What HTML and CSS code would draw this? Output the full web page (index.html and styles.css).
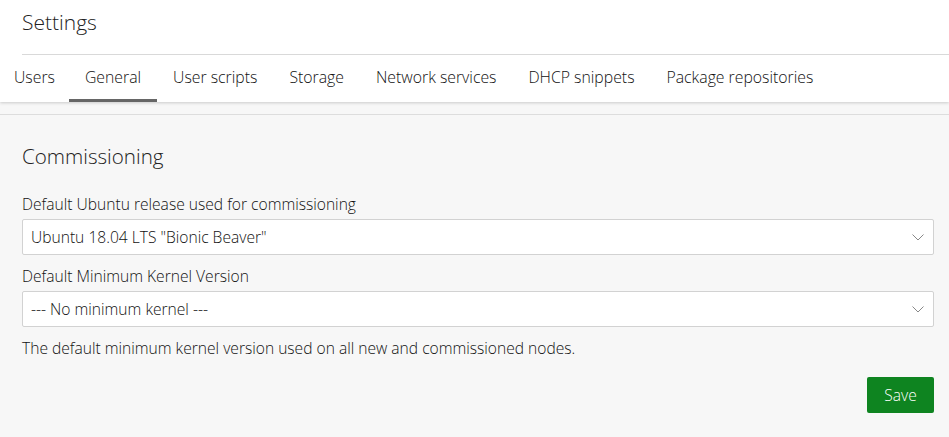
FILE: index.html
```html
<!DOCTYPE html>
<html>
<head>
<meta charset="utf-8">
<link rel="stylesheet" href="styles.css">
</head>
<body>
<header class="header">
  <h1 class="title">Settings</h1>
  <nav class="tabs">
    <a class="tab">Users</a>
    <a class="tab active">General</a>
    <a class="tab">User scripts</a>
    <a class="tab">Storage</a>
    <a class="tab">Network services</a>
    <a class="tab">DHCP snippets</a>
    <a class="tab">Package repositories</a>
  </nav>
</header>
<main class="content">
  <h2 class="section-title">Commissioning</h2>
  <label class="label">Default Ubuntu release used for commissioning</label>
  <div class="select"><span>Ubuntu 18.04 LTS "Bionic Beaver"</span>
    <svg class="chev" width="12" height="7" viewBox="0 0 12 7"><path d="M0.5 0.5 L6 6 L11.5 0.5" fill="none" stroke="#888" stroke-width="1"/></svg>
  </div>
  <label class="label">Default Minimum Kernel Version</label>
  <div class="select"><span>--- No minimum kernel ---</span>
    <svg class="chev" width="12" height="7" viewBox="0 0 12 7"><path d="M0.5 0.5 L6 6 L11.5 0.5" fill="none" stroke="#888" stroke-width="1"/></svg>
  </div>
  <p class="help">The default minimum kernel version used on all new and commissioned nodes.</p>
  <div class="actions"><button class="save">Save</button></div>
</main>
</body>
</html>
```
FILE: styles.css
```css
html, body {
  margin: 0;
  padding: 0;
  background: #f7f7f7;
  font-family: "Open Sans", "Noto Sans", sans-serif;
  color: #111;
}
.header {
  background: #fff;
  box-shadow: 0 1px 3px rgba(0,0,0,0.18);
  position: relative;
}
.title {
  margin: 0 0 0 22px;
  height: 55px;
  box-sizing: border-box;
  padding-top: 9px;
  font-size: 21px;
  font-weight: 300;
  line-height: 26px;
  color: #222;
  border-bottom: 1px solid #d9d9d9;
}
.tabs {
  display: flex;
  height: 47px;
}
.tab {
  display: block;
  padding: 0 16px;
  line-height: 44px;
  font-size: 15.8px;
  font-weight: 300;
  color: #111;
  border-bottom: 3px solid transparent;
}
.tab:first-child { padding-left: 14px; padding-right: 14px; }
.tab.active { border-bottom-color: #666; }
.content {
  margin-top: 12px;
  border-top: 1px solid #ddd;
  padding: 28px 15px 0 22px;
}
.section-title {
  margin: 0 0 25px;
  font-size: 20.6px;
  font-weight: 300;
  line-height: 26px;
  color: #222;
}
.label {
  display: block;
  font-size: 15.6px;
  font-weight: 300;
  line-height: 20px;
  margin-bottom: 5px;
}
.select {
  display: flex;
  align-items: center;
  justify-content: space-between;
  height: 36px;
  box-sizing: border-box;
  background: #fff;
  border: 1px solid #d2d2d2;
  border-radius: 2px;
  padding: 0 9px 0 8px;
  font-size: 15.6px;
  font-weight: 300;
  margin-bottom: 11px;
}
.help {
  margin: 2px 0 0;
  font-size: 15.6px;
  font-weight: 300;
  line-height: 20px;
}
.actions {
  display: flex;
  justify-content: flex-end;
  margin-top: 19px;
}
.save {
  background: #0e8420;
  color: #fff;
  border: 0;
  border-radius: 2px;
  width: 67px;
  height: 36px;
  font-family: inherit;
  font-size: 15.6px;
  font-weight: 300;
}
```
